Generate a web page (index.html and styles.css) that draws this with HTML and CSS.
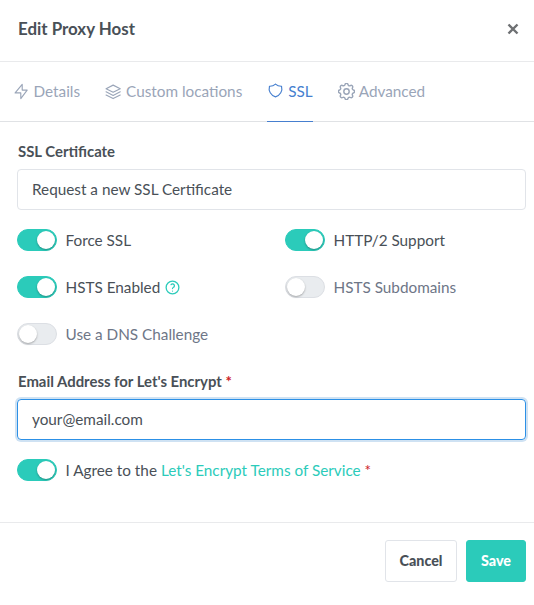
FILE: index.html
```html
<!DOCTYPE html>
<html lang="en">
<head>
<meta charset="utf-8">
<title>Edit Proxy Host</title>
<link rel="stylesheet" href="styles.css">
</head>
<body>
<div class="modal">
  <header class="head">
    <h1 class="title">Edit Proxy Host</h1>
    <svg class="close" viewBox="0 0 12 12" width="12" height="12"><path d="M1.5 1.5l9 9M10.500 1.500l-9 9"/></svg>
  </header>
  <nav class="tabs">
    <a class="tab"><svg class="ico" viewBox="0 0 24 24"><path d="M13 2v8h7L11 22v-8H3z"/></svg>Details</a>
    <a class="tab"><svg class="ico" viewBox="0 0 24 24"><path d="M11.500 3L1.500 8l10 5 10-5z"/><path d="M1.500 12.500l10 5 10-5"/><path d="M1.500 17l10 5 10-5"/></svg>Custom locations</a>
    <a class="tab active"><svg class="ico" viewBox="0 0 24 24"><path d="M12 3a12 12 0 0 0 8.500 3A12 12 0 0 1 12 21 12 12 0 0 1 3.500 6 12 12 0 0 0 12 3"/></svg>SSL</a>
    <a class="tab"><svg class="ico" viewBox="2.500 2.500 19 19"><path d="M10.300 4.300c.4-1.800 3-1.800 3.400 0a1.700 1.700 0 0 0 2.600 1.100c1.500-.9 3.300.8 2.400 2.400a1.700 1.700 0 0 0 1 2.500c1.800.4 1.800 3 0 3.400a1.700 1.700 0 0 0-1 2.600c.9 1.500-.9 3.300-2.400 2.400a1.700 1.700 0 0 0-2.600 1c-.4 1.800-3 1.800-3.400 0a1.700 1.700 0 0 0-2.600-1c-1.500.9-3.300-.9-2.400-2.400a1.700 1.700 0 0 0-1-2.600c-1.800-.4-1.800-3 0-3.400a1.700 1.700 0 0 0 1-2.500c-.9-1.600.9-3.300 2.400-2.400 1 .6 2.300.1 2.600-1.100z"/><circle cx="12" cy="12" r="3"/></svg>Advanced</a>
  </nav>
  <main class="body">
    <div class="field">
      <label class="label">SSL Certificate</label>
      <div class="input">Request a new SSL Certificate</div>
    </div>
    <div class="grid">
      <label class="sw"><span class="track on"><span class="knob"></span></span><span class="on-text">Force SSL</span></label>
      <label class="sw"><span class="track on"><span class="knob"></span></span><span class="on-text">HTTP/2 Support</span></label>
      <label class="sw"><span class="track on"><span class="knob"></span></span><span class="on-text">HSTS Enabled</span><svg class="help" viewBox="0 0 24 24"><circle cx="12" cy="12" r="9"/><path d="M12 17v.01M12 13.500a1.500 1.500 0 0 1 1-1.500 2.600 2.600 0 1 0-3-4"/></svg></label>
      <label class="sw"><span class="track"><span class="knob"></span></span><span class="off-text">HSTS Subdomains</span></label>
      <label class="sw"><span class="track"><span class="knob"></span></span><span class="off-text">Use a DNS Challenge</span></label>
    </div>
    <div class="field email">
      <label class="label">Email Address for Let's Encrypt <span class="req">*</span></label>
      <div class="input focus">your@email.com</div>
    </div>
    <label class="sw agree"><span class="track on"><span class="knob"></span></span><span class="on-text">I Agree to the <a class="link">Let's Encrypt Terms of Service</a> <span class="req">*</span></span></label>
  </main>
  <footer class="foot">
    <button class="btn cancel">Cancel</button>
    <button class="btn save">Save</button>
  </footer>
</div>
</body>
</html>
```
FILE: styles.css
```css
* { box-sizing: border-box; }
html, body { margin: 0; padding: 0; background: #fff; }
body { font-family: "Lato", "Noto Sans", sans-serif; font-size: 15.3px; color: #495057; }
.modal { width: 534px; height: 605px; display: flex; flex-direction: column; }
.head { height: 62px; flex: none; display: flex; align-items: center; justify-content: space-between; padding: 0 15px 4px 18px; border-bottom: 1px solid #e9eaec; }
.title { margin: 0; font-size: 16.9px; font-weight: 700; color: #495057; }
.close { fill: none; stroke: #6e7073; stroke-width: 2.400; }
.tabs { height: 60px; flex: none; display: flex; gap: 25px; padding-left: 12.5px; border-bottom: 1px solid #e0e2e5; }
.tab { display: flex; align-items: center; gap: 4px; height: 60px; padding-bottom: 2px; color: #9aa5b8; font-size: 15.3px; }
.tab.active { color: #467fcf; border-bottom: 1px solid #467fcf; }
.ico { width: 17px; height: 17px; fill: none; stroke: currentColor; stroke-width: 1.600; stroke-linecap: round; stroke-linejoin: round; }
.body { flex: 1; padding: 19px 8px 0 17px; }
.label { display: block; font-weight: 700; font-size: 14.9px; margin-bottom: 8px; padding-left: 1px; line-height: 20px; }
.input { height: 41px; border: 1px solid #e1e4e9; border-radius: 4px; padding: 0 14px 1px; display: flex; align-items: center; font-size: 15.3px; color: #495057; }
.input.focus { border-color: #2c90e6; box-shadow: 0 0 0 2px #cfe2f3; }
.grid { display: grid; grid-template-columns: 268px 1fr; row-gap: 25px; margin-top: 19px; }
.sw { display: flex; align-items: center; height: 22px; font-size: 15.3px; }
.track { width: 40px; height: 22px; flex: none; border-radius: 11px; background: #e9ecef; border: 1px solid #dcdfe4; position: relative; margin-right: 8.500px; }
.track.on { background: #2bcbba; border-color: #2bcbba; }
.knob { position: absolute; left: 1px; top: 1px; width: 18px; height: 18px; border-radius: 50%; background: #fff; box-shadow: 0 1px 2px rgba(0,0,0,.3); }
.on .knob { left: 19px; }
.on-text { color: #495057; }
.off-text { color: #6e7687; }
.help { width: 17px; height: 17px; margin-left: 4px; fill: none; stroke: #2bcbba; stroke-width: 1.800; stroke-linecap: round; }
.req { color: #cd201f; }
.link { color: #2bcbba; }
.email { margin-top: 26px; }
.agree { margin-top: 19px; }
.foot { height: 76px; flex: none; margin-bottom: 7px; border-top: 1px solid #e9eaec; display: flex; justify-content: flex-end; align-items: flex-start; gap: 9px; padding: 17px 8px 0 0; }
.btn { height: 42px; border-radius: 3px; font-family: inherit; font-size: 14.300px; font-weight: 900; padding: 0 0 2px; }
.cancel { width: 72px; background: #fff; border: 1px solid #e1e4e9; color: #495057; }
.save { width: 60px; background: #2bcbba; border: 1px solid #2bcbba; color: #fff; }
```
